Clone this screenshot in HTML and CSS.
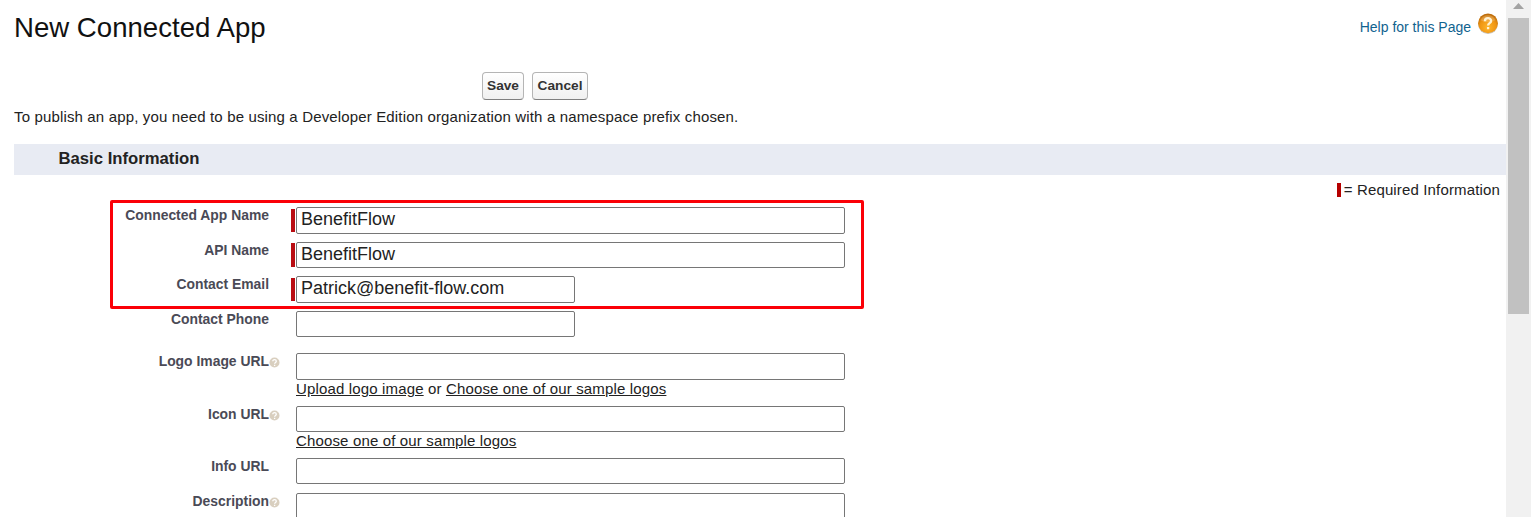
FILE: index.html
```html
<!DOCTYPE html>
<html lang="en">
<head>
    <meta charset="UTF-8">
    <title>New Connected App</title>
    <link rel="stylesheet" href="styles.css">
</head>
<body>
<svg class="defs" width="0" height="0">
    <defs>
        <radialGradient id="orange" cx="50%" cy="70%" r="65%">
            <stop offset="0" stop-color="#ffb52c"/>
            <stop offset=".65" stop-color="#ee9412"/>
            <stop offset="1" stop-color="#bd6c0b"/>
        </radialGradient>
        <symbol id="hint" viewBox="0 0 11 11">
            <circle cx="5.5" cy="5.5" r="5" fill="#d9cfbf"/>
            <path d="M3.8 4.3c0-2.2 3.5-2.1 3.5 0 0 1.2-1.7 1.2-1.7 2.5M5.6 7.7v1.2" fill="none" stroke="#fff" stroke-width="1.3"/>
        </symbol>
    </defs>
</svg>

<div class="page">
    <main class="content">
        <header class="header">
            <h1>New Connected App</h1>
            <a class="help" href="#">
                <span>Help for this Page</span>
                <svg width="22" height="22" viewBox="0 0 22 22">
                    <circle cx="11" cy="12.2" r="9.8" fill="#c9c2b8"/>
                    <circle cx="11" cy="11.3" r="9.9" fill="url(#orange)"/>
                    <path d="M3.4 8.3a8.2 8.2 0 0 1 15.2 0q-7.6 4-15.2 0z" fill="#fff" opacity=".18"/>
                    <path d="M7.9 9.2c0-4 6.2-3.9 6.2-.3 0 2.3-3 2.2-3 4.5M11.1 14.9v2.300" fill="none" stroke="#fff2d4" stroke-width="2.3"/>
                </svg>
            </a>
        </header>

        <div class="buttons">
            <button type="button">Save</button>
            <button type="button">Cancel</button>
        </div>
        <p class="message">To publish an app, you need to be using a Developer Edition organization with a namespace prefix chosen.</p>

        <div class="section-header">
            <h2>Basic Information</h2>
        </div>

        <form class="form">
            <div class="legend"><i class="mark"></i>= Required Information</div>
            <div class="highlight"></div>
            <div class="row required">
                <label for="name">Connected App Name</label>
                <div class="field"><input id="name" type="text" value="BenefitFlow"></div>
            </div>
            <div class="row required">
                <label for="api">API Name</label>
                <div class="field"><input id="api" type="text" value="BenefitFlow"></div>
            </div>
            <div class="row required">
                <label for="email">Contact Email</label>
                <div class="field"><input id="email" class="short" type="text" value="Patrick@benefit-flow.com"></div>
            </div>
            <div class="row last">
                <label for="phone">Contact Phone</label>
                <div class="field"><input id="phone" class="short" type="text"></div>
            </div>
            <div class="row tall">
                <label for="logo">Logo Image URL<svg class="hint"><use href="#hint"/></svg></label>
                <div class="field">
                    <input id="logo" type="text">
                    <div class="links"><a href="#">Upload logo image</a> or <a href="#">Choose one of our sample logos</a></div>
                </div>
            </div>
            <div class="row tall">
                <label for="icon">Icon URL<svg class="hint"><use href="#hint"/></svg></label>
                <div class="field">
                    <input id="icon" type="text">
                    <div class="links"><a href="#">Choose one of our sample logos</a></div>
                </div>
            </div>
            <div class="row">
                <label for="info">Info URL</label>
                <div class="field"><input id="info" type="text"></div>
            </div>
            <div class="row">
                <label for="description">Description<svg class="hint"><use href="#hint"/></svg></label>
                <div class="field"><textarea id="description"></textarea></div>
            </div>
        </form>
    </main>

    <div class="scrollbar">
        <svg width="11" height="6" viewBox="0 0 11 6"><path d="M0 6L5.5 0 11 6z" fill="#a3a3a3"/></svg>
        <div class="thumb"></div>
    </div>
</div>
</body>
</html>
```

FILE: styles.css
```css
* {
    box-sizing: border-box;
}
body {
    margin: 0;
    font: normal 15px/18px "Liberation Sans", Arial, Helvetica, sans-serif;
    letter-spacing: .15px;
    color: #222;
    background: #fff;
    overflow: hidden;
}
h1, h2, p {
    margin: 0;
}
.defs {
    display: block;
}
.page {
    display: flex;
    height: 517px;
    overflow: hidden;
}
.content {
    flex: 1;
    padding-left: 14px;
}
.header {
    display: flex;
    justify-content: space-between;
    height: 72px;
    padding: 12px 7px 0 0;
}
h1 {
    font-size: 27.6px;
    font-weight: normal;
    line-height: 32px;
    letter-spacing: 0;
    color: #111;
}
.help {
    display: flex;
    gap: 6px;
    font-size: 14px;
    line-height: 30px;
    letter-spacing: 0;
    color: #11638f;
    text-decoration: none;
}
.buttons {
    display: flex;
    gap: 8px;
    height: 28px;
    padding-left: 468px;
}
button {
    width: 42px;
    padding: 0 0 2px;
    border: 1px solid #b5b5b5;
    border-bottom-color: #7f7f7f;
    border-radius: 4px;
    background: linear-gradient(#fff, #f0f0f0);
    font: bold 13.7px "Liberation Sans", Arial, sans-serif;
    letter-spacing: 0;
    color: #333;
}
button + button {
    width: 56px;
}
.message {
    padding-top: 8px;
    height: 44px;
}
.section-header {
    height: 31px;
    padding-left: 44.5px;
    background: #e8ebf3;
}
h2 {
    font-size: 16.7px;
    line-height: 29px;
    letter-spacing: 0;
}
.form {
    position: relative;
    padding-top: 32.1px;
}
.legend {
    position: absolute;
    top: 6px;
    right: 6px;
    display: flex;
    align-items: center;
}
.mark {
    width: 4px;
    height: 14px;
    margin-right: 3px;
    background: #b60000;
}
.highlight {
    position: absolute;
    top: 25px;
    left: 96px;
    width: 754px;
    height: 109px;
    border: 3px solid #fb0007;
    border-radius: 2px;
}
.row {
    display: flex;
    height: 34.6px;
}
.row.last {
    height: 42.3px;
}
.row.tall {
    height: 52.4px;
}
label {
    position: relative;
    width: 255px;
    margin-right: 22px;
    text-align: right;
    font-size: 13.9px;
    font-weight: bold;
    line-height: 17px;
    letter-spacing: 0;
    color: #4a4a56;
}
.hint {
    position: absolute;
    top: 4px;
    left: 255px;
    width: 11px;
    height: 11px;
}
.field {
    padding-left: 5px;
}
.required .field {
    height: 23.4px;
    margin-top: 1.6px;
    border-left: 4px solid #b90c12;
    padding-left: 1px;
}
.required input {
    margin-top: -1.6px;
}
input, textarea {
    display: block;
    width: 549px;
    height: 26.45px;
    padding: 0 4px 1.5px;
    border: 1px solid #767676;
    border-radius: 2px;
    background: #fff;
    font: 18px "Liberation Sans", Arial, sans-serif;
    color: #222;
}
textarea {
    height: 80px;
    resize: none;
}
.short {
    width: 279px;
}
.links {
    line-height: 18px;
}
.links a {
    color: #222;
}
.scrollbar {
    display: flex;
    flex-direction: column;
    align-items: center;
    width: 25px;
    padding: 3px 0 0;
    background: #f1f1f1;
}
.thumb {
    width: 21px;
    height: 296px;
    margin-top: 9px;
    background: #c1c1c1;
}
```
